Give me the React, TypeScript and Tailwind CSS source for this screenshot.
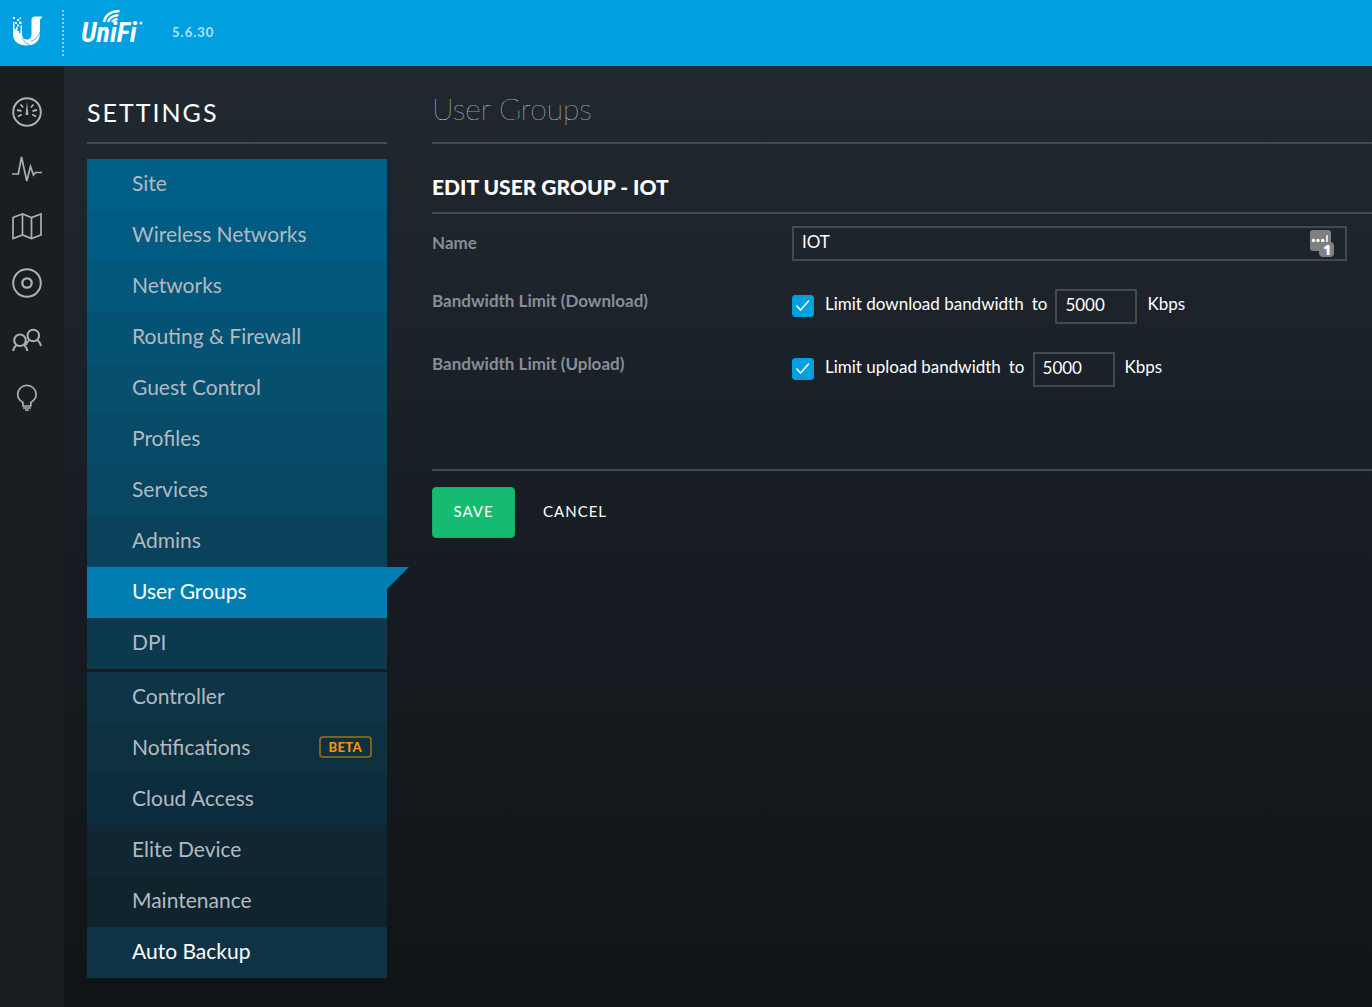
import { useState } from "react";
import type { ReactNode } from "react";

const siteLinks = [
  { label: "Site", color: "bg-[#005f87]" },
  { label: "Wireless Networks", color: "bg-[#005b82]" },
  { label: "Networks", color: "bg-[#02577b]" },
  { label: "Routing & Firewall", color: "bg-[#045375]" },
  { label: "Guest Control", color: "bg-[#064f6e]" },
  { label: "Profiles", color: "bg-[#074b68]" },
  { label: "Services", color: "bg-[#094661]" },
  { label: "Admins", color: "bg-[#0b425b]" },
  { label: "User Groups", color: "bg-[#007db1]", active: true },
  { label: "DPI", color: "bg-[#0b394e]" },
];

const controllerLinks = [
  { label: "Controller", color: "bg-[#0d3547]" },
  { label: "Notifications", color: "bg-[#0e3140]", beta: true },
  { label: "Cloud Access", color: "bg-[#0d2c3d]" },
  { label: "Elite Device", color: "bg-[#102733]" },
  { label: "Maintenance", color: "bg-[#10242d]" },
  { label: "Auto Backup", color: "bg-[#0f3346]", bright: true },
];

type NavLink = {
  label: string;
  color: string;
  active?: boolean;
  beta?: boolean;
  bright?: boolean;
};

function BrandMark() {
  return (
    <svg width="30" height="30" viewBox="0 0 30 30" fill="#fff" aria-hidden="true">
      <path d="M29 .5v1.200q-2 .3-2 2.300V17c0 8-5 12.500-13.500 12.500C5.500 29.500 0 25.500 0 18V6h1.500v7H3v-2h1.500v4H6v2h1.500V9.500H9V18c0 3.300 2 5.500 5 5.500s4.500-2.200 4.500-5.500V4q0-3.500 3.500-3.500z" />
      <path d="M0 1h2v2H0zM4 3h2v2H4zM6.500 1.500h1.500V3H6.500zM2 6h2v2H2zM6 5.500h2.500v2.500H6zM4 8.500h2v2H4z" />
      <path d="M9 22q3 6 8 7M27 16q-2 7-9 9" fill="none" stroke="#009fe0" strokeWidth=".7" />
    </svg>
  );
}

function Wordmark() {
  return (
    <svg width="64" height="46" viewBox="0 0 64 46" fill="#fff" role="img" aria-label="UniFi">
      <text
        x="0"
        y="34"
        fontFamily="'Roboto Condensed', Lato, sans-serif"
        fontSize="28"
        fontWeight="700"
        fontStyle="italic"
      >
        UniFi
      </text>
      <g fill="none" stroke="#fff" strokeWidth="2.300">
        <path d="M23 14Q25 3.500 38.500 3" />
        <path d="M27 14Q29 8 37.500 7.200" />
        <path d="M31 14Q32.500 11.500 36.500 11" />
      </g>
      <circle cx="60" cy="15" r="1.600" opacity=".8" />
    </svg>
  );
}

function RailIcon({ children }: { children: ReactNode }) {
  return (
    <svg
      width="30"
      height="30"
      viewBox="0 0 30 30"
      fill="none"
      stroke="#a5b4b5"
      strokeWidth="2"
      aria-hidden="true"
    >
      {children}
    </svg>
  );
}

const railItems = [
  {
    label: "Dashboard",
    icon: (
      <>
        <circle cx="15" cy="15" r="13.800" />
        <path d="M15 5l1.500 13h-3z" fill="#a5b4b5" stroke="none" />
        <path
          d="M8.500 7.500l2.700 3M5 13l4.500 1M5.800 19.500l4-2M21.500 7.500l-2.700 3M25 13l-4.500 1M24.200 19.500l-4-2"
          strokeWidth="1.800"
        />
      </>
    ),
  },
  {
    label: "Statistics",
    icon: <path d="M0 20h6.300l3.200-17 5.300 24 3.700-14.500 3 8.500 2-2.500H30" strokeWidth="1.700" />,
  },
  {
    label: "Map",
    icon: (
      <path
        d="M1 6.500l9.500-3.500 9 3.500L29 3v21L19.500 27.500l-9-3.500L1 27.500zM10.500 3v21M19.500 6.500v21"
        strokeWidth="1.700"
      />
    ),
  },
  {
    label: "Devices",
    icon: (
      <>
        <circle cx="15" cy="15" r="13.800" />
        <circle cx="15" cy="15" r="4.700" strokeWidth="2.300" />
      </>
    ),
  },
  {
    label: "Clients",
    icon: (
      <>
        <circle cx="8" cy="15.300" r="5.800" />
        <circle cx="21.300" cy="10.500" r="5.800" />
        <path d="M1 26q.7-3.700 3.500-6M15.500 26q-.7-3.700-3.500-6M29 21q-.7-3.700-3.500-6M17.300 15q-2.500 2-3.300 5" />
      </>
    ),
  },
  {
    label: "Insights",
    icon: (
      <path
        d="M11 24v-3.500C7.500 18.500 5.700 16 5.700 12.500a9.200 9.200 0 0 1 18.400 0c0 3.500-1.800 6-5.300 8V24zM11 26h8M13 28h4"
        strokeWidth="1.700"
      />
    ),
  },
];

function MenuList({ links }: { links: NavLink[] }) {
  return (
    <ul>
      {links.map((link) => (
        <li key={link.label} className="relative">
          <a
            href="#"
            aria-current={link.active ? "page" : undefined}
            className={`flex h-[51px] items-center justify-between pr-[15px] pb-1 pl-[45px] text-[21px] leading-8 ${link.color} ${
              link.active || link.bright ? "text-white" : "text-[#b3bac1]"
            }`}
          >
            {link.label}
            {link.beta && (
              <span className="rounded-sm border-2 border-[#80601f] px-2 text-[13px] leading-[18px] font-black tracking-wide text-[#f8910d]">
                BETA
              </span>
            )}
          </a>
          {link.active && (
            <svg className="absolute top-0 left-full" width="22" height="22" viewBox="0 0 22 22" aria-hidden="true">
              <path d="M0 0h22L0 22z" fill="#007db1" />
            </svg>
          )}
        </li>
      ))}
    </ul>
  );
}

function BandwidthRow({ title, label, id }: { title: string; label: string; id: string }) {
  const [enabled, setEnabled] = useState(true);
  const [rate, setRate] = useState("5000");

  return (
    <div className="mt-7 flex" role="group" aria-labelledby={`${id}-title`}>
      <div id={`${id}-title`} className="w-[360px] shrink-0 text-[17px] leading-6 font-bold text-[#878e98]">
        {title}
      </div>
      <div className="flex flex-1 items-start text-[17px] leading-[30px] text-white">
        <label className="flex">
          <span className="relative mt-1.5 mr-[11px] size-[22px]">
            <input
              type="checkbox"
              checked={enabled}
              onChange={(e) => setEnabled(e.target.checked)}
              className="block size-[22px] appearance-none rounded-[3px] border border-[#009fe0] checked:bg-[#009fe0]"
            />
            {enabled && (
              <svg className="pointer-events-none absolute inset-0" width="22" height="22" viewBox="0 0 22 22" aria-hidden="true">
                <path d="M4.500 10.500l4 4.500 8.500-9.500" fill="none" stroke="#fff" strokeWidth="1.500" />
              </svg>
            )}
          </span>
          {label}
        </label>
        <label htmlFor={`${id}-rate`} className="mx-2">
          to
        </label>
        <input
          id={`${id}-rate`}
          value={rate}
          onChange={(e) => setRate(e.target.value)}
          className="h-[35px] w-[82px] border-2 border-[#404a50] bg-transparent px-2 pb-1 text-[17px] outline-none"
        />
        <span className="ml-2.5">Kbps</span>
      </div>
    </div>
  );
}

export default function App() {
  const [name, setName] = useState("IOT");

  return (
    <div className="flex min-h-screen flex-col bg-[#14181c] font-['Lato',sans-serif]">
      <header className="flex h-[66px] items-center bg-[#009fe0] pl-[13px]">
        <div className="pb-1">
          <BrandMark />
        </div>
        <div className="mr-[17px] ml-[19px] h-[46px] border-l-2 border-dotted border-[#8ad3f1]" />
        <div className="pb-1">
          <Wordmark />
        </div>
        <span className="ml-[27px] text-[13px] font-bold tracking-[1px] text-[#b5e2f6]">5.6.30</span>
      </header>

      <div className="flex flex-1">
        <nav aria-label="Main" className="w-16 shrink-0 bg-[#1a1d22] pt-[31px] pl-3">
          <ul className="flex flex-col gap-[27px]">
            {railItems.map((item) => (
              <li key={item.label}>
                <a href="#" aria-label={item.label} className="block size-[30px]">
                  <RailIcon>{item.icon}</RailIcon>
                </a>
              </li>
            ))}
          </ul>
        </nav>

        <div className="flex flex-1 bg-linear-to-b from-[#20292f] via-[#181d24] via-50% to-[#101416] pl-[23px]">
          <aside className="w-[300px] shrink-0 pb-[29px]">
            <h1 className="h-[78px] border-b-2 border-[#434b52] pt-[30px] text-[25px] leading-8 tracking-[2px] text-white">
              SETTINGS
            </h1>
            <nav aria-label="Settings" className="mt-[15px] flex flex-col gap-[3px]">
              <MenuList links={siteLinks} />
              <MenuList links={controllerLinks} />
            </nav>
          </aside>

          <main className="ml-[45px] flex-1">
            <h2 className="h-[78px] border-b-2 border-[#434b52] pt-[22px] text-[30px] leading-10 font-thin text-white">
              User Groups
            </h2>
            <form onSubmit={(e) => e.preventDefault()}>
              <h3 className="border-b-2 border-[#434b52] pt-[27px] pb-[9px] text-[21px] leading-8 font-black text-white">
                EDIT USER GROUP - IOT
              </h3>
              <div className="pr-[25px] pb-[82px]">
                <div className="mt-3 flex items-center">
                  <label htmlFor="name" className="w-[360px] shrink-0 pb-0.5 text-[17px] leading-6 font-bold text-[#878e98]">
                    Name
                  </label>
                  <div className="relative flex-1">
                    <input
                      id="name"
                      value={name}
                      onChange={(e) => setName(e.target.value)}
                      className="block h-[35px] w-full border-2 border-[#404a50] bg-transparent px-2 pb-1 text-[17px] text-white outline-none"
                    />
                    <svg className="absolute top-1 right-3" width="25" height="28" viewBox="0 0 25 28" aria-hidden="true">
                      <rect width="21" height="21" rx="3" fill="#808080" />
                      <circle cx="3.500" cy="10.500" r="1.700" fill="#fff" />
                      <circle cx="8" cy="10.500" r="1.700" fill="#fff" />
                      <circle cx="12.700" cy="10.500" r="1.700" fill="#fff" />
                      <path d="M17 5v8" stroke="#fff" strokeWidth="1.500" />
                      <rect x="9" y="12" width="15" height="15" rx="4" fill="#808080" />
                      <text x="13" y="25" fill="#fff" fontSize="14" fontWeight="800" fontFamily="Open Sans, sans-serif">
                        1
                      </text>
                    </svg>
                  </div>
                </div>
                <BandwidthRow id="download" title="Bandwidth Limit (Download)" label="Limit download bandwidth" />
                <BandwidthRow id="upload" title="Bandwidth Limit (Upload)" label="Limit upload bandwidth" />
              </div>
              <div className="flex border-t-2 border-[#434b52] pt-4">
                <button
                  type="submit"
                  className="h-[51px] w-[83px] rounded-sm border border-[#12b067] bg-[#16bb72] pb-0.5 text-[15px] tracking-[1px] text-white"
                >
                  SAVE
                </button>
                <button type="button" className="h-[51px] px-7 pb-0.5 text-[15px] tracking-[1px] text-white">
                  CANCEL
                </button>
              </div>
            </form>
          </main>
        </div>
      </div>
    </div>
  );
}
